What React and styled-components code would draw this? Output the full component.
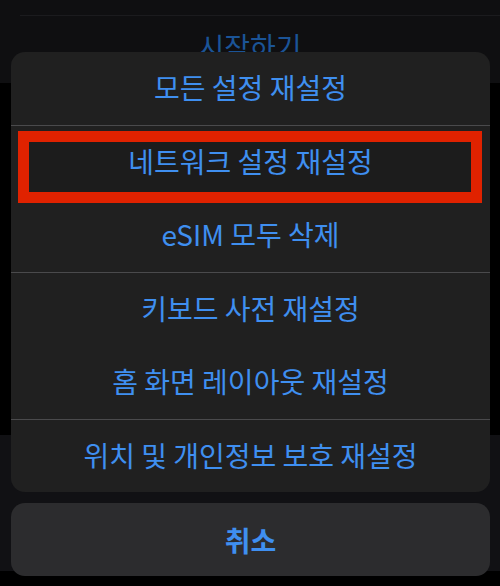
import styled, { createGlobalStyle } from 'styled-components';

const GlobalStyle = createGlobalStyle`
  html, body {
    margin: 0;
    padding: 0;
    background: #000;
  }
  body {
    font-family: 'Noto Sans CJK KR', 'Noto Sans', sans-serif;
  }
`;

const Screen = styled.div`
  position: relative;
  width: 500px;
  height: 586px;
  overflow: hidden;
  background: #000;
  display: flex;
  flex-direction: column;
`;

const TopPanel = styled.div`
  height: 83px;
  background: #0f0f11;
  box-sizing: border-box;
  padding-top: 15px;
`;

const TopRule = styled.div`
  margin-left: 20px;
  height: 1px;
  background: #1b1b1e;
`;

const StartLabel = styled.div`
  text-align: center;
  margin-top: 12px;
  font-size: 28px;
  line-height: 36px;
  color: #1b5497;
`;

const LowerPanel = styled.div`
  margin-top: 352px;
  height: 136px;
  background: #111114;
`;

const SheetArea = styled.div`
  position: absolute;
  top: 52px;
  left: 11px;
  right: 10px;
  display: flex;
  flex-direction: column;
  gap: 11px;
`;

const Sheet = styled.div`
  background: #202020;
  border-radius: 14px;
  overflow: hidden;
`;

const Group = styled.div`
  & + & {
    border-top: 1px solid #4a4a4c;
  }
`;

const Row = styled.div`
  position: relative;
  height: ${(p) => p.$h || 73}px;
  display: flex;
  align-items: center;
  justify-content: center;
  font-size: 28px;
  color: #3f8ff0;
`;

const Highlight = styled.div`
  position: absolute;
  top: 5px;
  bottom: -4px;
  left: 7px;
  right: 8px;
  border: 11px solid #e02200;
  background: #1c1c1c;
`;

const RowText = styled.span`
  position: relative;
  margin-top: -3px;
`;

const CancelButton = styled.div`
  height: 73px;
  border-radius: 14px;
  background: #2c2c2e;
  display: flex;
  align-items: center;
  justify-content: center;
  font-size: 28px;
  font-weight: 700;
  color: #3f8ff0;
`;

const groups = [
  [{ label: '모든 설정 재설정', h: 73 }],
  [
    { label: '네트워크 설정 재설정', h: 73, marked: true },
    { label: 'eSIM 모두 삭제', h: 73 },
  ],
  [
    { label: '키보드 사전 재설정', h: 73 },
    { label: '홈 화면 레이아웃 재설정', h: 73 },
  ],
  [{ label: '위치 및 개인정보 보호 재설정', h: 72 }],
];

export default function App() {
  return (
    <>
      <GlobalStyle />
      <Screen>
        <TopPanel>
          <TopRule />
          <StartLabel>시작하기</StartLabel>
        </TopPanel>
        <LowerPanel />
        <SheetArea>
          <Sheet>
            {groups.map((g, i) => (
              <Group key={i}>
                {g.map((item) => (
                  <Row key={item.label} $h={item.h}>
                    {item.marked && <Highlight />}
                    <RowText>{item.label}</RowText>
                  </Row>
                ))}
              </Group>
            ))}
          </Sheet>
          <CancelButton>취소</CancelButton>
        </SheetArea>
      </Screen>
    </>
  );
}
